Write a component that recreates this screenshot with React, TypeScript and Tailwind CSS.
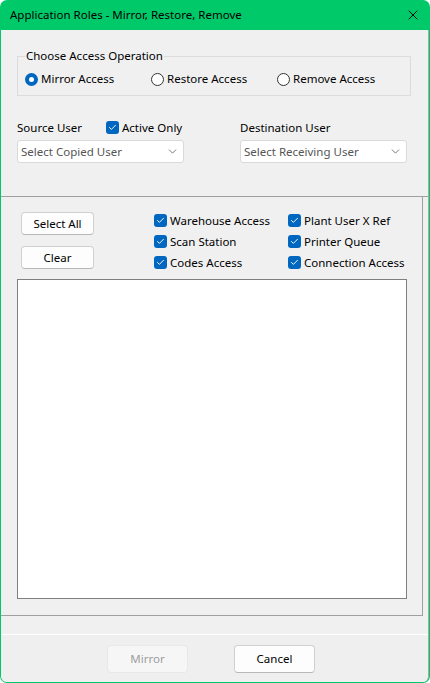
import { X, ChevronDown, Check } from "lucide-react";

const FONT = { fontFamily: '"Noto Sans", "Segoe UI", sans-serif' };

function Radio({ label, checked }: { label: string; checked?: boolean }) {
  return (
    <label className="flex items-center gap-[3px] w-[126px] whitespace-nowrap">
      {checked ? (
        <span className="w-[13px] h-[13px] rounded-full bg-[#0067c0] flex items-center justify-center">
          <span className="w-[5px] h-[5px] rounded-full bg-white" />
        </span>
      ) : (
        <span className="w-[13px] h-[13px] rounded-full border border-[#333] bg-white" />
      )}
      <span>{label}</span>
    </label>
  );
}

function Box({ label }: { label: string }) {
  return (
    <label className="flex items-center gap-[3px] h-[21px] whitespace-nowrap">
      <span className="w-[13px] h-[13px] shrink-0 rounded-[3px] bg-[#0067c0] flex items-center justify-center">
        <Check className="w-[9px] h-[9px] text-white" strokeWidth={2.5} />
      </span>
      <span>{label}</span>
    </label>
  );
}

function Select({ placeholder }: { placeholder: string }) {
  return (
    <div className="w-[167px] h-[23px] bg-white border border-[#d9d9d9] rounded-[3px] flex items-center justify-between pl-[3px] pr-[4px] text-[#555]">
      <span>{placeholder}</span>
      <ChevronDown className="w-[13px] h-[13px] text-[#444]" strokeWidth={1.3} />
    </div>
  );
}

function Btn({ children, disabled, w = "w-[73px]", h = "h-[23px]" }: { children: string; disabled?: boolean; w?: string; h?: string }) {
  return (
    <button
      className={
        disabled
          ? `${w} ${h} rounded-[4px] border border-[#e8e8e8] bg-[#f6f6f6] text-[#9d9d9d]`
          : `${w} ${h} rounded-[4px] border border-[#d0d0d0] border-b-[#b8b8b8] bg-[#fdfdfd] text-black`
      }
    >
      {children}
    </button>
  );
}

export default function App() {
  return (
    <div className="w-[430px] h-[683px] bg-white text-[11.5px] text-black" style={FONT}>
      <div className="w-full h-full flex flex-col bg-[#00c96a] rounded-[7px] overflow-hidden">
        <div className="h-[30px] shrink-0 flex items-center justify-between pl-[10px] pr-[9px]">
          <span>Application Roles - Mirror, Restore, Remove</span>
          <X className="w-[16px] h-[16px]" strokeWidth={1.4} />
        </div>

        <div className="flex-1 flex flex-col mx-[1px] mb-[1px] bg-[#f0f0f0] border-r border-[#a8a8a8] rounded-b-[6px] overflow-hidden">
          {/* top panel */}
          <div className="h-[167px] shrink-0 border-b border-[#a0a0a0] px-[16px] pt-[18px]">
            <fieldset className="w-[390px] h-[48px] border border-[#dcdcdc] px-[7px]">
              <legend className="px-[1px] leading-[16px]">Choose Access Operation</legend>
              <div className="flex items-center h-[22px] mt-[4px]">
                <Radio label="Mirror Access" checked />
                <Radio label="Restore Access" />
                <Radio label="Remove Access" />
              </div>
            </fieldset>

            <div className="flex gap-[56px] mt-[22px]">
              <div className="flex flex-col gap-[3px]">
                <div className="flex items-center h-[19px]">
                  <span className="w-[89px]">Source User</span>
                  <Box label="Active Only" />
                </div>
                <Select placeholder="Select Copied User" />
              </div>
              <div className="flex flex-col gap-[3px]">
                <div className="flex items-center h-[19px]">Destination User</div>
                <Select placeholder="Select Receiving User" />
              </div>
            </div>
          </div>

          {/* middle panel */}
          <div className="h-[419px] shrink-0 mr-[5px] border-r border-b border-[#a0a0a0] px-[16px] pt-[15px]">
            <div className="flex">
              <div className="flex flex-col gap-[11px] pl-[4px] w-[137px]">
                <Btn>Select All</Btn>
                <Btn>Clear</Btn>
              </div>
              <div className="flex flex-col -mt-[2px] w-[134px]">
                <Box label="Warehouse Access" />
                <Box label="Scan Station" />
                <Box label="Codes Access" />
              </div>
              <div className="flex flex-col -mt-[2px]">
                <Box label="Plant User X Ref" />
                <Box label="Printer Queue" />
                <Box label="Connection Access" />
              </div>
            </div>
            <div className="w-[390px] h-[320px] mt-[6px] bg-white border border-[#7f7f7f]" />
          </div>

          <div className="h-[18px] shrink-0" />
          <div className="flex-1 border-t border-white bg-[#efefef] flex justify-center items-start gap-[46px] pt-[10px] pr-[7px]">
            <Btn disabled w="w-[81px]" h="h-[28px]">Mirror</Btn>
            <Btn w="w-[81px]" h="h-[28px]">Cancel</Btn>
          </div>
        </div>
      </div>
    </div>
  );
}
